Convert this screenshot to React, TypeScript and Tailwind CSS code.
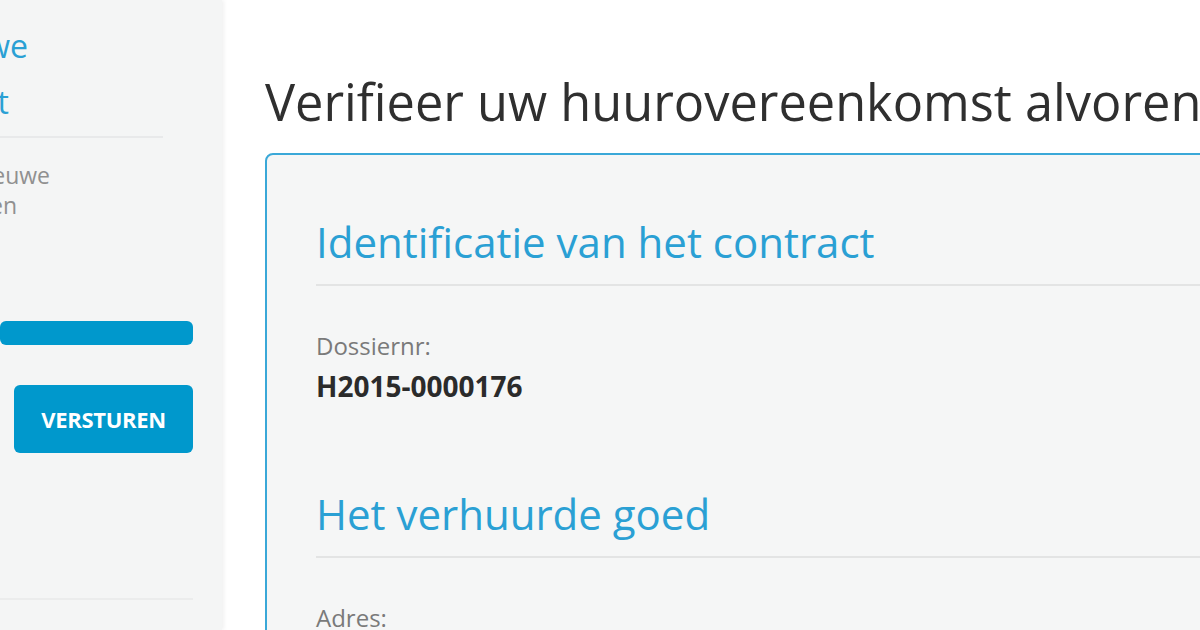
export default function App() {
  return (
    <div className="flex h-[630px] w-[1200px] overflow-hidden bg-white font-['Open_Sans',sans-serif]">
      <Sidebar />
      <main className="flex-1 pl-[43px] pt-[67px]">
        <h1 className="whitespace-nowrap text-[50.5px] leading-[70px] text-[#2f2f2f]">
          Verifieer uw huurovereenkomst alvorens te ondertekenen
        </h1>
        <div className="mt-[16px] w-[1000px] rounded-[8px] border-2 border-[#3aa8d8] bg-[#f5f6f6] pl-[49px] pt-[59px]">
          <Section title="Identificatie van het contract" label="Dossiernr:" value="H2015-0000176" />
          <Section title="Het verhuurde goed" label="Adres:" value="" />
        </div>
      </main>
    </div>
  );
}

function Sidebar() {
  return (
    <aside className="relative z-10 flex w-[222px] shrink-0 flex-col bg-[#f4f5f5] shadow-[2px_0_4px_rgba(0,0,0,0.06)]">
      <div className="pt-[18px] text-[32px] leading-[56px] text-[#2aa0d4]">
        <div className="flex w-[28px] justify-end whitespace-nowrap">Nieuwe</div>
        <div className="flex w-[9px] justify-end whitespace-nowrap">contract</div>
      </div>
      <div className="mt-[6px] h-[2px] w-[163px] bg-[#e8e9ea]" />
      <div className="mt-[22px] text-[23px] leading-[30px] text-[#909090]">
        <div className="flex w-[50px] justify-end whitespace-nowrap">Maak een nieuwe</div>
        <div className="flex w-[17px] justify-end whitespace-nowrap">huurcontract maken</div>
      </div>
      <div className="mt-[101px] h-[24px] w-[193px] rounded-md bg-[#0098cc]" />
      <div className="mt-[40px] pl-[14px]">
        <button className="h-[68px] w-[179px] rounded-[6px] bg-[#0098cc] text-[22px] font-bold tracking-[-0.3px] text-white">
          VERSTUREN
        </button>
      </div>
      <div className="mt-[145px] h-[2px] w-[193px] bg-[#ebecec]" />
    </aside>
  );
}

function Section({ title, label, value }: { title: string; label: string; value: string }) {
  return (
    <section className="mb-[82px]">
      <h2 className="whitespace-nowrap text-[42px] leading-[56px] text-[#2aa0d4]">{title}</h2>
      <div className="mt-[14px] h-[2px] bg-[#e3e4e4]" />
      <div className="mt-[44px] text-[24px] leading-[32px] text-[#7a7a7a]">{label}</div>
      {value && <div className="mt-[6px] text-[28px] font-bold leading-[36px] text-[#2b2b2b]">{value}</div>}
    </section>
  );
}
